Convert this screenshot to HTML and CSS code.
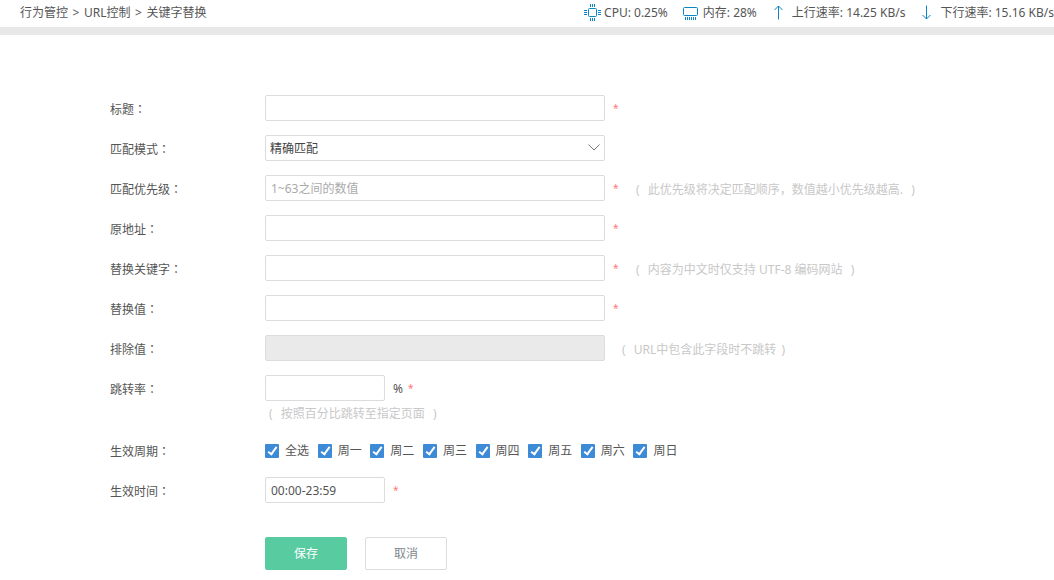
FILE: index.html
```html
<!DOCTYPE html>
<html lang="zh-CN">
<head>
<meta charset="utf-8">
<title>关键字替换</title>
<link rel="stylesheet" href="styles.css">
</head>
<body>
<header class="topbar">
  <nav class="crumbs"><span>行为管控</span><span class="sep">&gt;</span><span>URL控制</span><span class="sep">&gt;</span><span>关键字替换</span></nav>
  <div class="status">
    <span class="stat">
      <svg class="cpu" width="18" height="18" viewBox="0 0 18 18" aria-hidden="true"><rect x="4.500" y="4.500" width="8" height="8" rx="1"/><path d="M6.500 0v3M8.500 0v3M10.500 0v3M6.500 14v3M8.500 14v3M10.500 14v3M0 6.500h3M0 8.500h3M0 10.500h3M14 6.500h3M14 8.500h3M14 10.500h3"/></svg>
      CPU: 0.25%</span>
    <span class="stat">
      <svg class="mem" width="16" height="14" viewBox="0 0 16 14" aria-hidden="true"><rect x="0.500" y="1.500" width="14" height="8" rx="1"/><path d="M2.500 11v3M4.500 11v3M6.500 11v3M8.500 11v3M10.500 11v3M12.500 11v3"/></svg>
      内存: 28%</span>
    <span class="stat">
      <svg class="arrow" width="10" height="16" viewBox="0 0 10 16" aria-hidden="true"><path d="M4.500 14.500V1M0.500 5L4.500 1L8.500 5"/></svg>
      上行速率: 14.25 KB/s</span>
    <span class="stat">
      <svg class="arrow" width="10" height="16" viewBox="0 0 10 16" aria-hidden="true"><path d="M4.500 0.500V14M0.500 10L4.500 14L8.500 10"/></svg>
      下行速率: 15.16 KB/s</span>
  </div>
</header>
<main>
<form class="form">
  <div class="row"><label class="name" for="title">标题<span class="colon" lang="zh-TW">：</span></label><input class="box" id="title" type="text"><span class="req">*</span></div>
  <div class="row"><label class="name" for="mode">匹配模式<span class="colon" lang="zh-TW">：</span></label>
    <span class="select"><select class="box" id="mode"><option>精确匹配</option></select><svg class="chev" width="12" height="7" viewBox="0 0 12 7" aria-hidden="true"><path d="M0.500 0.500L6 6L11.500 0.500"/></svg></span></div>
  <div class="row"><label class="name" for="prio">匹配优先级<span class="colon" lang="zh-TW">：</span></label><input class="box" id="prio" type="text" placeholder="1~63之间的数值"><span class="req">*</span><span class="hint">(&nbsp; <span class="note">此优先级将决定匹配顺序，数值越小优先级越高.</span>&nbsp; )</span></div>
  <div class="row"><label class="name" for="src">原地址<span class="colon" lang="zh-TW">：</span></label><input class="box" id="src" type="text"><span class="req">*</span></div>
  <div class="row"><label class="name" for="key">替换关键字<span class="colon" lang="zh-TW">：</span></label><input class="box" id="key" type="text"><span class="req">*</span><span class="hint">(&nbsp; <span class="note">内容为中文时仅支持 UTF-8 编码网站</span>&nbsp; )</span></div>
  <div class="row"><label class="name" for="val">替换值<span class="colon" lang="zh-TW">：</span></label><input class="box" id="val" type="text"><span class="req">*</span></div>
  <div class="row"><label class="name" for="excl">排除值<span class="colon" lang="zh-TW">：</span></label><input class="box" id="excl" type="text" disabled><span class="hint">(&nbsp; <span class="note">URL中包含此字段时不跳转</span> )</span></div>
  <div class="row top"><label class="name" for="rate">跳转率<span class="colon" lang="zh-TW">：</span></label>
    <div class="stack"><div class="line"><input class="box short" id="rate" type="text"><span class="unit">%</span><span class="req near">*</span></div><span class="hint below">(&nbsp; <span class="note">按照百分比跳转至指定页面</span>&nbsp; )</span></div></div>
  <div class="row" role="group" aria-labelledby="period"><span class="name" id="period">生效周期<span class="colon" lang="zh-TW">：</span></span>
    <div class="days">
      <label class="day"><input type="checkbox" checked>全选</label>
      <label class="day"><input type="checkbox" checked>周一</label>
      <label class="day"><input type="checkbox" checked>周二</label>
      <label class="day"><input type="checkbox" checked>周三</label>
      <label class="day"><input type="checkbox" checked>周四</label>
      <label class="day"><input type="checkbox" checked>周五</label>
      <label class="day"><input type="checkbox" checked>周六</label>
      <label class="day"><input type="checkbox" checked>周日</label>
    </div></div>
  <div class="row"><label class="name" for="time">生效时间<span class="colon" lang="zh-TW">：</span></label><input class="box short" id="time" type="text" value="00:00-23:59"><span class="req">*</span></div>
  <div class="actions"><button class="btn save" type="submit">保存</button><button class="btn" type="button">取消</button></div>
</form>
</main>
</body>
</html>
```
FILE: styles.css
```css
* { box-sizing: border-box; }
body {
  margin: 0;
  background: #fff;
  color: #555;
  font: 12px/18px "Noto Sans", "Noto Sans CJK SC", sans-serif;
  overflow-x: hidden;
}
input, select, button { font: inherit; color: inherit; }

.topbar {
  display: flex;
  justify-content: space-between;
  height: 35px;
  padding: 4px 0 0 20px;
  border-bottom: 8px solid #e8e8e8;
  white-space: nowrap;
}
.crumbs { display: flex; }
.sep { width: 16px; text-align: center; }
.status { display: flex; gap: 15px; height: 18px; }
.stat { display: flex; align-items: center; gap: 4px; }
.stat svg { fill: none; stroke: #0a85c7; flex: none; }
.stat .cpu { margin-right: -2px; }
.arrow { margin: 0 4px 0 2px; }

.form {
  display: flex;
  flex-direction: column;
  gap: 14px;
  padding: 60px 20px 10px 110px;
}
.row { display: flex; align-items: center; min-height: 26px; }
.row.top { align-items: flex-start; }
.name { flex: none; width: 155px; height: 26px; line-height: 28px; }
.colon { font-family: "Noto Sans CJK TC", sans-serif; }
.box {
  width: 340px;
  height: 26px;
  padding: 0 5px;
  border: 1px solid #dcdcdc;
  border-radius: 2px;
  background: #fff;
  outline: 0;
}
.box.short { width: 120px; }
.box::placeholder { color: #aaa; opacity: 1; }
.box:disabled { background: #eaeaea; }
.select { position: relative; display: flex; }
.select .box { appearance: none; padding: 2px 4px 0; color: #444; }
.chev {
  position: absolute;
  right: 5px;
  top: 9px;
  fill: none;
  stroke: #777;
  pointer-events: none;
}
.req { margin-left: 8px; width: 6px; color: #f77; font-size: 10px; }
.req.near { margin-left: 5px; }
.unit { margin-left: 8px; padding-top: 2px; }
.hint { height: 22px; margin-left: 17px; padding-top: 4px; color: #c8c8c8; white-space: nowrap; }
.note { padding: 0 2px; }
.stack { display: flex; flex-direction: column; }
.line { display: flex; align-items: center; }
.hint.below { margin-left: 4px; }

.days { display: grid; grid-template-columns: repeat(8, 1fr); width: 421px; }
.day { display: flex; align-items: center; gap: 6px; height: 26px; padding-top: 2px; white-space: nowrap; }
.day input {
  appearance: none;
  position: relative;
  flex: none;
  width: 14px;
  height: 14px;
  margin: 0;
  border-radius: 1px;
  background: #3d8bd6;
}
.day input:checked::after {
  content: "";
  position: absolute;
  left: 5px;
  top: 1px;
  box-sizing: border-box;
  width: 5px;
  height: 10px;
  border: solid #fff;
  border-width: 0 2px 2px 0;
  transform: rotate(36deg);
}

.actions { display: flex; gap: 18px; margin-top: 20px; padding-left: 155px; }
.btn {
  width: 82px;
  height: 33px;
  padding: 0;
  border: 1px solid #dcdcdc;
  border-radius: 2px;
  background: #fff;
  color: #7d878c;
}
.btn.save { border-color: #58cba1; background: #58cba1; color: #fff; }
```
